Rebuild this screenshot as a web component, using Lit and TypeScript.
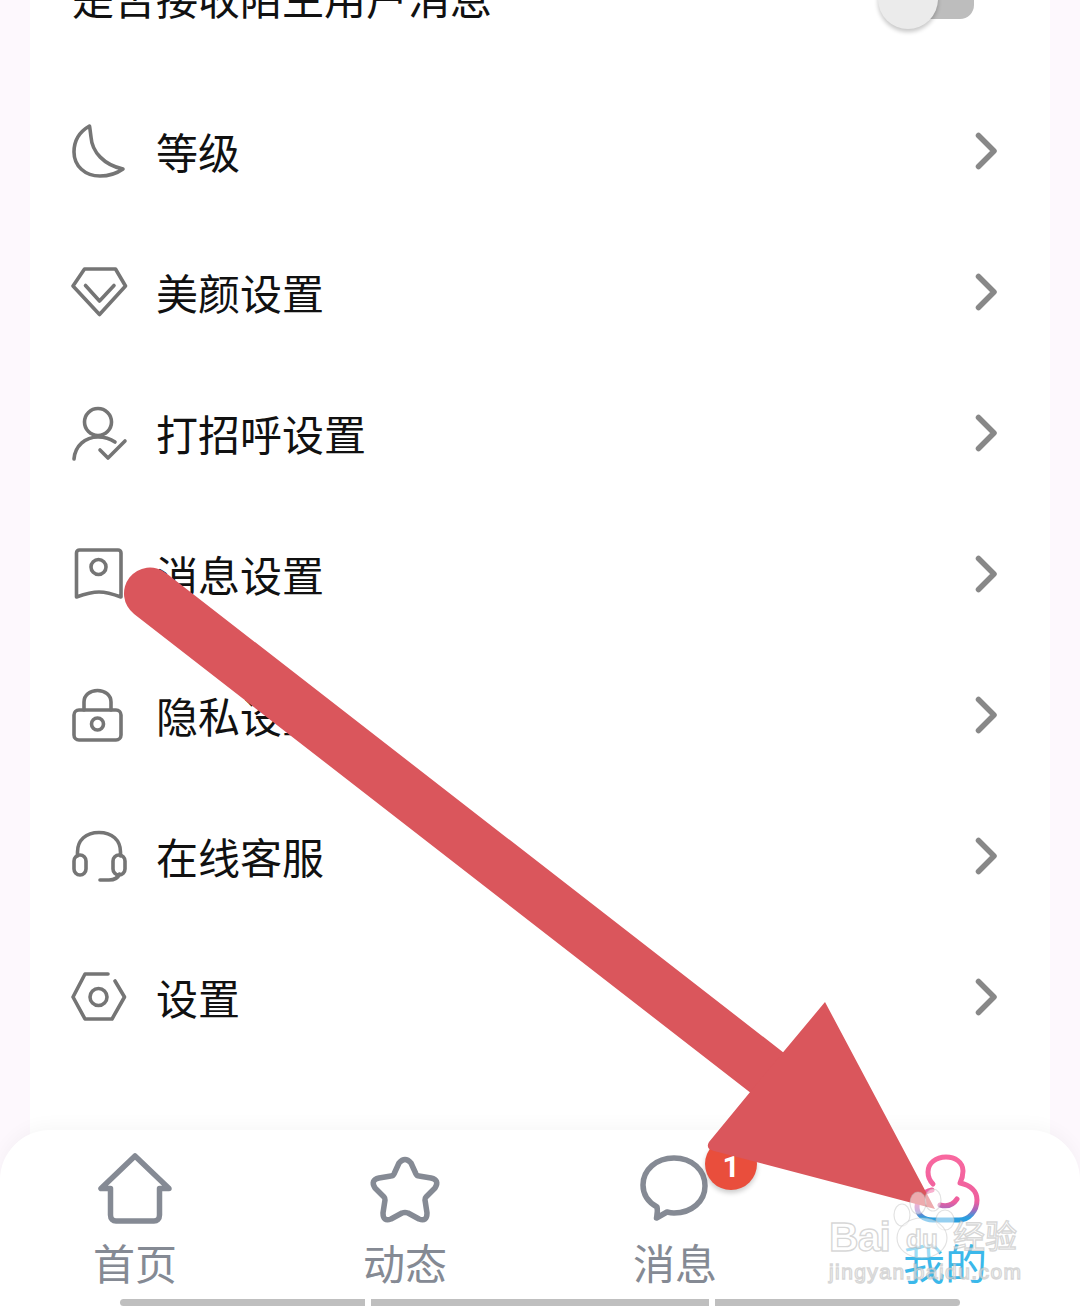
import { LitElement, html, css, svg } from "lit";
import { customElement } from "lit/decorators.js";

const rows = [
  { label: "等级", icon: svg`<path d="M18.5 3C8 9 3 18 3 29C3 43 14 53 29 53C37 53 45 51 52 46C33 42 21 29 20 14C19.5 10 19 6 18.5 3Z"/>` },
  { label: "美颜设置", icon: svg`<path d="M13.5 5H44.5L54.500 22L28.5 50.5L2 22Z"/><path d="M14.5 21.5L28.5 37L43 21.5"/>` },
  { label: "打招呼设置", icon: svg`<circle cx="27" cy="17" r="13.5"/><path d="M3 54C4 41 14 32 27 32C33 32 39 33.500 44 37"/><path d="M29 45L37 53L54 36"/>` },
  { label: "消息设置", icon: svg`<path d="M5.500 51V7A3 3 0 0 1 8.500 4H47A3 3 0 0 1 50 7V51C42 48 33 46 28 46C22 46 14 48 5.500 51Z"/><circle cx="27.500" cy="21" r="7.500"/>` },
  { label: "隐私设置", icon: svg`<rect x="3" y="23" width="47" height="30" rx="5"/><path d="M13 23V15C13 8 19 3.500 26.500 3.500C34 3.500 40 8 40 15V23"/><circle cx="26.500" cy="37" r="6"/>` },
  { label: "在线客服", icon: svg`<path d="M6.500 28V24C6.500 12 15 4.500 28 4.500C41 4.500 49.500 12 49.500 24V28"/><rect x="3" y="27" width="12" height="20" rx="6"/><rect x="42" y="27" width="12" height="20" rx="6"/><path d="M29 52H38C44 52 47 50 48.500 46"/>` },
  { label: "设置", icon: svg`<path d="M37 5H14L2 28L14 50H41L53.500 28L44 12"/><circle cx="27.500" cy="28" r="8.500"/>` },
];

@customElement("app-root")
export class AppRoot extends LitElement {
  static styles = css`
    :host { display: block; font-family: "Noto Sans CJK SC", "Noto Sans", sans-serif; }
    .page { position: relative; width: 1080px; height: 1308px; overflow: hidden; background: #fdf8fd; display: grid; grid-template: 1fr / 1fr; }
    .card { grid-area: 1 / 1; margin: 0 30px; background: #fff; display: flex; flex-direction: column; justify-content: flex-end; padding-bottom: 241px; min-height: 0; }
    .toggle-row { flex: none; height: 60px; margin-bottom: 51px; padding: 0 76px 0 42px; display: flex; align-items: center; justify-content: space-between; font-size: 42px; line-height: 60px; color: #111; }
    .toggle-row span { padding-bottom: 4px; }
    .switch { position: relative; width: 96px; height: 40px; }
    .track { position: absolute; right: 0; top: 0; width: 70px; height: 40px; border-radius: 14px; background: #bdbdbd; }
    .knob { position: absolute; left: 0; top: -10px; width: 60px; height: 60px; border-radius: 50%; background: #ebebeb; box-shadow: 0 3px 4px rgba(0,0,0,.22); }
    .row { flex: none; height: 141px; padding: 0 53px 0 41px; display: flex; align-items: center; color: #111; font-size: 42px; }
    .row .ico { width: 58px; height: 56px; flex: none; fill: none; stroke: #757575; stroke-width: 3.600; stroke-linecap: round; stroke-linejoin: round; margin-right: 27px; }
    .row span { flex: 1; line-height: 56px; }
    .chev { width: 24px; height: 38px; flex: none; fill: none; stroke: #888; stroke-width: 5.500; stroke-linecap: round; stroke-linejoin: round; }
    .nav { grid-area: 1 / 1; align-self: end; height: 178px; box-sizing: border-box; background: #fff; border-radius: 50px 50px 0 0; box-shadow: 0 -4px 18px rgba(0,0,0,.035); padding-top: 20px; display: flex; flex-direction: column; z-index: 1; }
    .tabs { display: grid; grid-template-columns: repeat(4, 1fr); }
    .tab { display: flex; flex-direction: column; align-items: center; color: #858a94; font-size: 42px; line-height: 48px; }
    .tab svg { width: 80px; height: 80px; margin-bottom: 8px; fill: none; stroke: #858a94; stroke-width: 5.500; stroke-linecap: round; stroke-linejoin: round; }
    .tab.on { color: #3bb8ea; }
    .tab.on svg { stroke: url(#mine); stroke-width: 5; }
    .bars { display: flex; gap: 6px; margin: 13px 120px 0; }
    .bars i { height: 7px; background: #bfbfbf; }
    .bars i:nth-child(1) { flex: 245; border-radius: 4px 0 0 4px; }
    .bars i:nth-child(2) { flex: 338; }
    .bars i:nth-child(3) { flex: 245; border-radius: 0 4px 4px 0; }
    .badge { position: absolute; left: 705px; top: 1138px; width: 52px; height: 52px; border-radius: 50%; background: #e94e3c; color: #fff; font: bold 30px/57px "Roboto", sans-serif; text-align: center; box-shadow: 0 3px 5px rgba(0,0,0,.2); z-index: 2; }
    .arrow { position: absolute; inset: 0; width: 1080px; height: 1308px; z-index: 3; }
    .wm { position: absolute; inset: 0; width: 1080px; height: 1308px; z-index: 4; }
    .wm text { fill: rgba(255,255,255,.6); stroke: rgba(175,175,175,.5); stroke-width: 1.400; font-family: "Liberation Sans", "Noto Sans CJK SC", sans-serif; }
    .wm .paw { fill: rgba(255,255,255,.5); stroke: rgba(190,190,190,.45); stroke-width: 1.200; }
  `;

  render() {
    return html`
      <div class="page">
        <div class="card">
          <div class="toggle-row">
            <span>是否接收陌生用户消息</span>
            <div class="switch"><div class="track"></div><div class="knob"></div></div>
          </div>
          ${rows.map((r) => html`
            <div class="row">
              <svg class="ico" viewBox="0 0 58 56">${r.icon}</svg>
              <span>${r.label}</span>
              <svg class="chev" viewBox="0 0 24 38"><path d="M5.500 3.500L21 19L5.500 34.500"/></svg>
            </div>`)}
        </div>
        <div class="nav">
          <div class="tabs">
            <div class="tab">
              <svg viewBox="0 0 80 80"><path d="M40 6L6 38.500H15.500V65C15.500 69 18 71 21 71H59C62 71 64.500 69 64.500 65V38.500H74Z"/></svg>
              首页
            </div>
            <div class="tab">
              <svg viewBox="0 0 80 80"><path d="M34 13Q40 6 46 13L51 24Q52 26 54 26L66 28Q75 30 70 38L61 47Q60 48 60 50L62 63Q62 72 54 69L43 63Q40 62 37 63L26 69Q18 72 18 63L20 50Q20 48 19 47L10 38Q5 30 14 28L26 26Q28 26 29 24Z"/></svg>
              动态
            </div>
            <div class="tab">
              <svg viewBox="0 0 80 80"><path d="M39 8C21 8 8 20 8 35C8 45 13 52 22 57C23 61 22 65 21.500 68L32 62C34 62.500 37 63 39 63C57 63 70 51 70 36C70 20 57 8 39 8Z"/></svg>
              消息
            </div>
            <div class="tab on">
              <svg viewBox="0 0 80 80">
                <defs><linearGradient id="mine" gradientUnits="userSpaceOnUse" x1="40" y1="7" x2="40" y2="71"><stop offset="0" stop-color="#f8689f"/><stop offset=".7" stop-color="#ee5f9e"/><stop offset=".82" stop-color="#a868bc"/><stop offset=".95" stop-color="#2a9fe0"/></linearGradient></defs>
                <path d="M27 40C18 42 12 48 12 57C12 64 18 70 28 70H54C64 70 72 61 72 50C72 41 65 35 55 33C57 29 58 25 58 21C58 12 50 7 41 7C31 7 23 13 23 22C23 27 25 31 28 34"/>
                <path d="M35 55C42 57 48 55 52 49"/>
              </svg>
              我的
            </div>
          </div>
          <div class="bars"><i></i><i></i><i></i></div>
        </div>
        <div class="badge">1</div>
        <svg class="arrow" viewBox="0 0 1080 1308">
          <path d="M150 593.500L770 1075" stroke="#da565c" stroke-width="52" stroke-linecap="round" fill="none"/>
          <path d="M825 1002L935 1209L714 1151Q705 1149 709 1142L760 1080Z" fill="#da565c"/>
        </svg>
        <svg class="wm" viewBox="0 0 1080 1308">
          <ellipse class="paw" cx="918" cy="1203" rx="8" ry="11"/>
          <ellipse class="paw" cx="933" cy="1200" rx="8" ry="11"/>
          <ellipse class="paw" cx="902" cy="1215" rx="8" ry="11"/>
          <ellipse class="paw" cx="945" cy="1220" rx="9" ry="10"/>
          <ellipse class="paw" cx="922" cy="1238" rx="25" ry="20"/>
          <text x="829" y="1251" font-size="41" font-weight="700" textLength="62">Bai</text>
          <text x="906" y="1248" font-size="26" font-weight="700">du</text>
          <text x="953" y="1248" font-size="32">经验</text>
          <text x="829" y="1279" font-size="21" textLength="192">jingyan.baidu.com</text>
        </svg>
      </div>
    `;
  }
}
